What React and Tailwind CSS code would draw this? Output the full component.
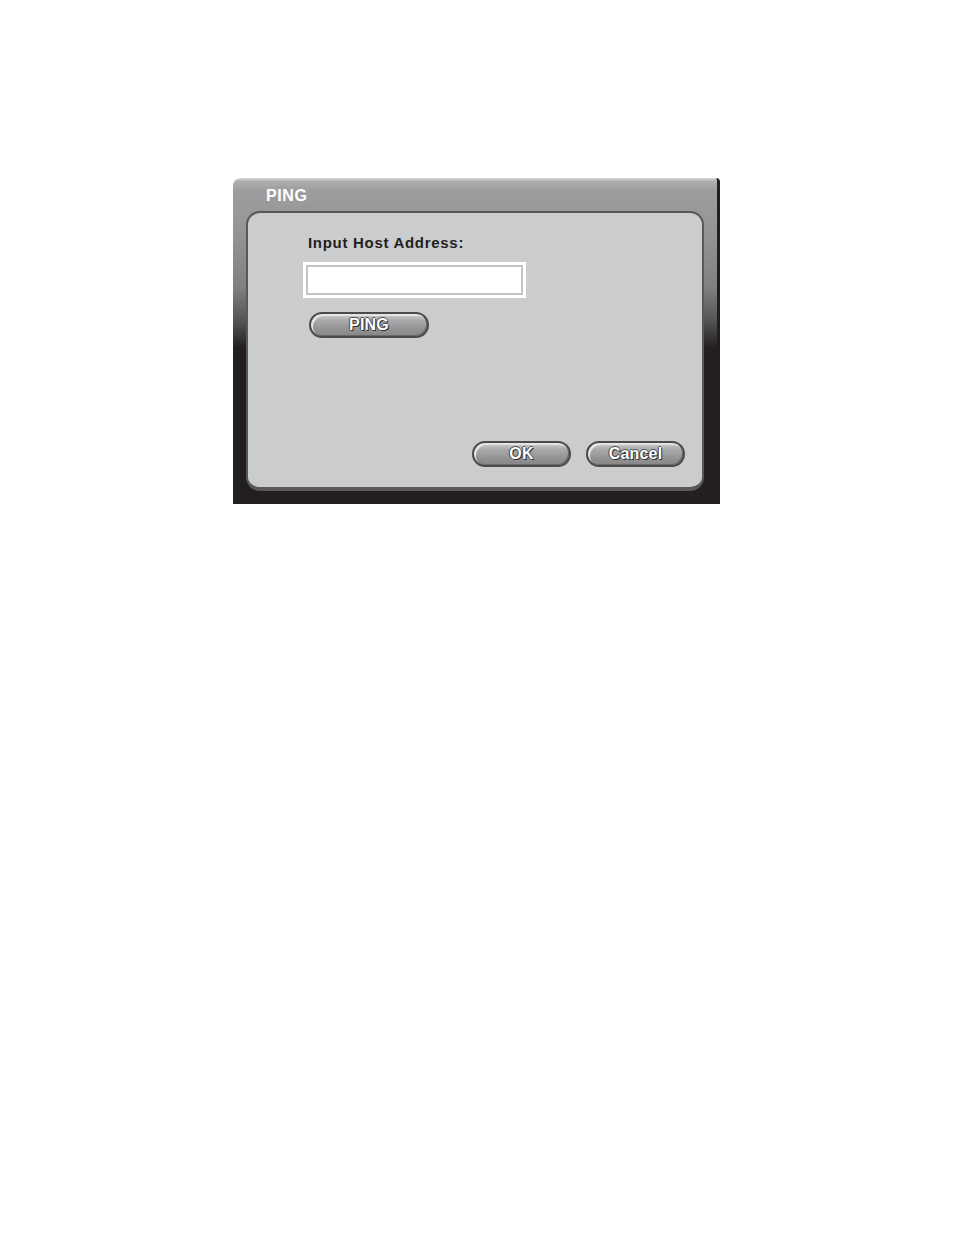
import React from "react";

function PillButton({ label, width }) {
  return (
    <button
      className={`${width} h-[26px] rounded-full border-2 border-[#4b4b4d] bg-[linear-gradient(to_bottom,#cfcfd0_0%,#a9a9aa_30%,#959596_65%,#868687_100%)] shadow-[inset_2px_2px_0_#e4e4e4,inset_-1px_-1px_0_#6a6a6a] flex items-center justify-center text-white text-[16px] font-bold leading-none tracking-[0.2px] [text-shadow:0_0_1px_#222,1px_1px_0_#333,-1px_0_0_#555,0_-1px_0_#555]`}
      style={{ fontFamily: '"Liberation Sans", Arial, sans-serif' }}
    >
      {label}
    </button>
  );
}

export default function App() {
  return (
    <div className="w-[954px] h-[1235px] bg-white pt-[178px] pl-[233px]" style={{ fontFamily: '"Liberation Sans", Arial, sans-serif' }}>
      <div className="w-[487px] h-[326px] rounded-tl-[8px] rounded-tr-[4px] border-r-[3px] border-[#231f20] bg-[linear-gradient(to_bottom,#dedede_0px,#b0b0b0_3px,#9d9d9d_12px,#939393_60px,#808080_110px,#505050_145px,#231f20_170px,#231f20_100%)] flex flex-col pl-[13px] pr-[13px] pb-[13px]">
        <div className="h-[33px] flex items-center pl-[20px] pt-[2px]">
          <span className="text-white text-[16px] font-bold tracking-[0.6px] leading-none">PING</span>
        </div>
        <div className="flex-1 rounded-[14px] border-2 border-b-[4px] border-[#58585a] bg-[#cbcccd] flex flex-col pl-[55px] pr-[17px] pt-[22px] pb-[20px]">
          <div className="pl-[5px] text-[#231f20] text-[15px] font-bold tracking-[0.7px] leading-none">Input Host Address:</div>
          <div className="mt-[12px] w-[223px] h-[36px] border-[3px] border-white bg-white shadow-[inset_0_0_0_2px_#c3c4c5]" />
          <div className="mt-[14px] pl-[6px]">
            <PillButton label="PING" width="w-[120px]" />
          </div>
          <div className="mt-auto flex justify-end gap-[15px]">
            <PillButton label="OK" width="w-[99px]" />
            <PillButton label="Cancel" width="w-[99px]" />
          </div>
        </div>
      </div>
    </div>
  );
}
